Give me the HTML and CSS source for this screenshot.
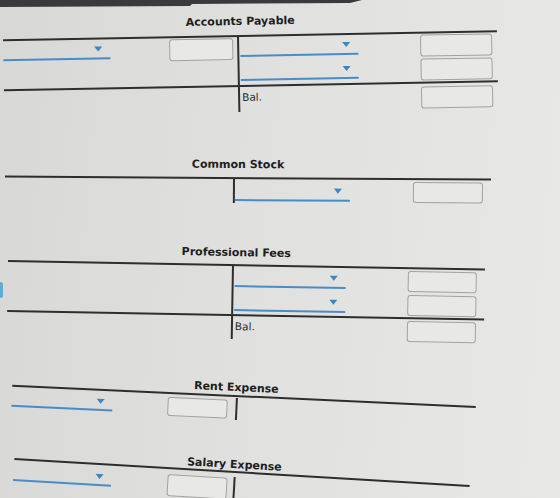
FILE: index.html
```html
<!DOCTYPE html>
<html lang="en">
<head>
<meta charset="utf-8">
<title>T-Accounts</title>
<link rel="stylesheet" href="styles.css">
</head>
<body>
<div class="bezel"></div>
<span class="edge-tab"></span>
<main class="ledger">

  <section class="acct ap">
    <h2 class="acct-title">Accounts Payable</h2>
    <div class="t closed">
      <div class="side dr">
        <div class="entry"><span class="pick"><i class="caret"></i></span><span class="amt"></span></div>
      </div>
      <div class="side cr">
        <div class="entry"><span class="pick"><i class="caret"></i></span><span class="amt"></span></div>
        <div class="entry"><span class="pick"><i class="caret"></i></span><span class="amt"></span></div>
      </div>
    </div>
    <div class="foot">
      <div class="side dr"></div>
      <div class="side cr"><span class="bal">Bal.</span><span class="amt"></span></div>
    </div>
  </section>

  <section class="acct cs">
    <h2 class="acct-title">Common Stock</h2>
    <div class="t">
      <div class="side dr"></div>
      <div class="side cr">
        <div class="entry"><span class="pick"><i class="caret"></i></span><span class="amt"></span></div>
      </div>
    </div>
  </section>

  <section class="acct pf">
    <h2 class="acct-title">Professional Fees</h2>
    <div class="t closed">
      <div class="side dr"></div>
      <div class="side cr">
        <div class="entry"><span class="pick"><i class="caret"></i></span><span class="amt"></span></div>
        <div class="entry"><span class="pick"><i class="caret"></i></span><span class="amt"></span></div>
      </div>
    </div>
    <div class="foot">
      <div class="side dr"></div>
      <div class="side cr"><span class="bal">Bal.</span><span class="amt"></span></div>
    </div>
  </section>

  <section class="acct re">
    <h2 class="acct-title">Rent Expense</h2>
    <div class="t">
      <div class="side dr">
        <div class="entry"><span class="pick"><i class="caret"></i></span><span class="amt"></span></div>
      </div>
      <div class="side cr"></div>
    </div>
  </section>

  <section class="acct se">
    <h2 class="acct-title">Salary Expense</h2>
    <div class="t">
      <div class="side dr">
        <div class="entry"><span class="pick"><i class="caret"></i></span><span class="amt"></span></div>
      </div>
      <div class="side cr"></div>
    </div>
  </section>

</main>
</body>
</html>
```

FILE: styles.css
```css
html, body {
  margin: 0;
  padding: 0;
}

body {
  width: 560px;
  height: 498px;
  overflow: hidden;
  position: relative;
  font-family: "DejaVu Sans", Verdana, sans-serif;
  color: #222;
  background: linear-gradient(95deg, #d8d8d6 0%, #e0e0de 45%, #e8e8e6 100%);
}

/* dark window frame along the top edge */
.bezel {
  height: 7px;
  background: #3a3a3c;
  clip-path: polygon(0 0, 362px 0, 350px 3px, 192px 4px, 190px 6px, 0 7px);
}

/* small blue tab peeking in at the left edge */
.edge-tab {
  position: absolute;
  left: -2px;
  top: 282px;
  width: 5px;
  height: 16px;
  border-radius: 3px;
  background: #63abd5;
  filter: blur(0.7px);
}

.ledger {
  display: flex;
  flex-direction: column;
}

/* one T-account */
.acct {
  --l: 230px;
  --r: 250px;
  --tilt: 0deg;
  --ml: 0px;
  --mt: 0px;
  --tb: 6px;
  --tp: 0px;
  --gap: 0px;
  --pw: 110px;
  --ph: 20px;
  --pl: 1px;
  --aw: 70px;
  --ah: 22px;
  --at: 1px;
  --ar: 5px;
  --row: 24px;
  margin-left: var(--ml);
  margin-top: var(--mt);
  width: calc(var(--l) + var(--r));
  transform: rotate(var(--tilt));
  transform-origin: var(--l) 25px;
}

.acct-title {
  box-sizing: border-box;
  height: 24px;
  width: calc(2 * var(--l));
  margin: 0;
  padding-left: var(--tp);
  padding-bottom: var(--tb);
  display: flex;
  align-items: flex-end;
  justify-content: center;
  font-size: 11px;
  line-height: 13px;
  font-weight: bold;
  color: #1e1e1e;
}

.t,
.foot {
  display: grid;
  grid-template-columns: var(--l) var(--r);
}

.t {
  border-top: 2px solid #2e2e2e;
}

.t.closed {
  border-bottom: 2px solid #2e2e2e;
}

.t .side {
  margin-top: var(--gap);
}

.cr {
  border-left: 2px solid #2e2e2e;
  padding-left: var(--pl);
}

.entry {
  display: flex;
  align-items: flex-start;
  height: var(--row);
}

/* account picker: blue underline with a caret */
.pick {
  box-sizing: border-box;
  width: var(--pw);
  height: var(--ph);
  border-bottom: 2px solid #4a8cc6;
  display: flex;
  justify-content: flex-end;
  align-items: flex-end;
  padding-right: 8px;
  padding-bottom: 6px;
}

.caret {
  width: 0;
  height: 0;
  border-left: 4.5px solid transparent;
  border-right: 4.5px solid transparent;
  border-top: 5.5px solid #3a86c4;
}

/* amount input */
.amt {
  box-sizing: border-box;
  margin-left: auto;
  margin-right: var(--ar);
  margin-top: var(--at);
  width: var(--aw);
  height: var(--ah);
  border: 1.5px solid #a2a2a2;
  border-radius: 3px;
  background: #e8e8e6;
}

.foot .cr {
  display: flex;
  align-items: flex-start;
}

.bal {
  font-size: 10.5px;
  line-height: 12px;
  margin-top: 4px;
  margin-left: 1px;
  color: #2a2a2a;
}

/* per-account geometry */
.ap {
  --ml: 3px;
  --mt: 4px;
  --l: 234px;
  --r: 260px;
  --tilt: -1.05deg;
  --tb: 7px;
  --tp: 7px;
}
.ap .dr .pick { --pw: 107px; }
.ap .dr .amt { --aw: 64px; --ar: 4px; }
.ap .cr .pick { --pw: 118px; }
.ap .cr .amt { --aw: 72px; --ar: 5px; }
.ap .foot { height: 25px; }
.ap .foot .amt { --at: 3px; }

.cs {
  --ml: 5px;
  --mt: 41px;
  --l: 228px;
  --r: 258px;
  --tilt: 0.35deg;
  --tb: 6px;
  --tp: 10px;
  --pl: 0px;
  --pw: 115px;
  --ph: 22px;
  --aw: 70px;
  --ah: 21px;
  --at: 2px;
  --ar: 8px;
}

.pf {
  --ml: 8px;
  --mt: 37px;
  --l: 224px;
  --r: 253px;
  --tilt: 1deg;
  --tb: 5px;
  --tp: 8px;
  --pw: 111px;
  --ph: 21px;
  --aw: 69px;
  --ah: 21px;
  --at: 2px;
  --ar: 8px;
}
.pf .foot { height: 22px; }

.re {
  --ml: 12px;
  --mt: 33px;
  --l: 224px;
  --r: 240px;
  --tilt: 2.6deg;
  --tb: 1px;
  --gap: 1px;
  --row: 22px;
  --pw: 101px;
  --ph: 19px;
  --aw: 60px;
  --ah: 19px;
  --at: 2px;
  --ar: 8px;
}

.se {
  --ml: 14px;
  --mt: 27px;
  --l: 220px;
  --r: 236px;
  --tilt: 3.4deg;
  --tb: 0px;
  --gap: 4px;
  --row: 30px;
  --pw: 98px;
  --ph: 17px;
  --aw: 60px;
  --ah: 22px;
  --at: 1px;
  --ar: 6px;
}
.re .pick,
.se .pick {
  padding-bottom: 5px;
}
```
